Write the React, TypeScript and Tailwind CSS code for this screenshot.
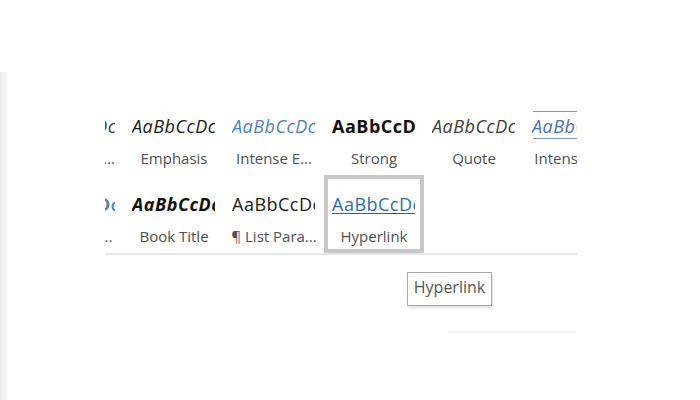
import React from "react";

type CellProps = {
  preview: string;
  label: string;
  previewClass: string;
  selected?: boolean;
  quote?: boolean;
};

function Cell({ preview, label, previewClass, selected, quote }: CellProps) {
  return (
    <div
      className={`relative box-border w-[100px] h-[78px] shrink-0 border-4 pt-[13px] ${
        selected ? "border-[#c8c8c8]" : "border-transparent"
      }`}
    >
      {quote && (
        <>
          <div className="absolute left-[5px] right-0 top-[10px] h-px bg-[#7d98c0]" />
          <div className="absolute left-[5px] right-0 top-[37px] h-px bg-[#7d98c0]" />
        </>
      )}
      <div
        className={`ml-[4px] w-[83px] h-[24px] overflow-hidden whitespace-nowrap text-[18px] leading-[24px] tracking-[0.5px] font-['Open_Sans',sans-serif] ${previewClass}`}
      >
        {preview}
      </div>
      <div className="mt-[10px] flex justify-center whitespace-nowrap text-[15px] leading-[20px] text-[#505050] font-['Open_Sans',sans-serif]">
        <span className="shrink-0">{label}</span>
      </div>
    </div>
  );
}

function Partial(props: CellProps) {
  return (
    <div className="w-[19px] shrink-0 overflow-hidden flex justify-end">
      <Cell {...props} />
    </div>
  );
}

export default function App() {
  return (
    <div className="relative w-[700px] h-[400px] overflow-hidden bg-white flex font-['Open_Sans',sans-serif]">
      <div className="w-[9px] mt-[72px] shrink-0 bg-gradient-to-r from-[#eaeaea] via-[#f2f2f2] to-white" />
      <div className="ml-[96px] pt-[97px] flex flex-col">
        <div className="w-[472px] overflow-hidden flex flex-col border-b-2 border-[#e6e6e6]">
          <div className="flex">
            <Partial
              preview="AaBbCcDc"
              label="Subtle Em..."
              previewClass="italic text-[#404040]"
            />
            <Cell preview="AaBbCcDc" label="Emphasis" previewClass="italic text-[#1a1a1a]" />
            <Cell
              preview="AaBbCcDc"
              label="Intense E..."
              previewClass="italic text-[#4f7fc4]"
            />
            <Cell preview="AaBbCcDc" label="Strong" previewClass="font-bold text-[#111111]" />
            <Cell preview="AaBbCcDc" label="Quote" previewClass="italic text-[#404040]" />
            <Cell
              preview="AaBbCcDc"
              label="Intense Q..."
              previewClass="italic text-[#4a74b4]"
              quote
            />
          </div>
          <div className="flex">
            <Partial
              preview="AaBbCcDc"
              label="Intense R..."
              previewClass="font-bold [font-variant:small-caps] text-[#5a7fb8]"
            />
            <Cell
              preview="AaBbCcDc"
              label="Book Title"
              previewClass="font-bold italic text-[#111111]"
            />
            <Cell preview="AaBbCcDc" label="¶ List Para..." previewClass="text-[#1a1a1a]" />
            <Cell
              preview="AaBbCcDc"
              label="Hyperlink"
              previewClass="text-[#2f6db0] underline decoration-[#2f5f95] underline-offset-[2px]"
              selected
            />
          </div>
        </div>
        <div className="mt-[76px] ml-[343px] w-[128px] h-[2px] bg-[#f4f4f4]" />
      </div>
      <div className="absolute left-[407px] top-[272px] w-[85px] h-[34px] box-border border border-[#a9a9a9] bg-white shadow-[1px_2px_3px_rgba(0,0,0,0.12)] flex justify-center pt-[4px]">
        <span className="text-[16px] leading-[20px] text-[#555555] whitespace-nowrap">Hyperlink</span>
      </div>
    </div>
  );
}
